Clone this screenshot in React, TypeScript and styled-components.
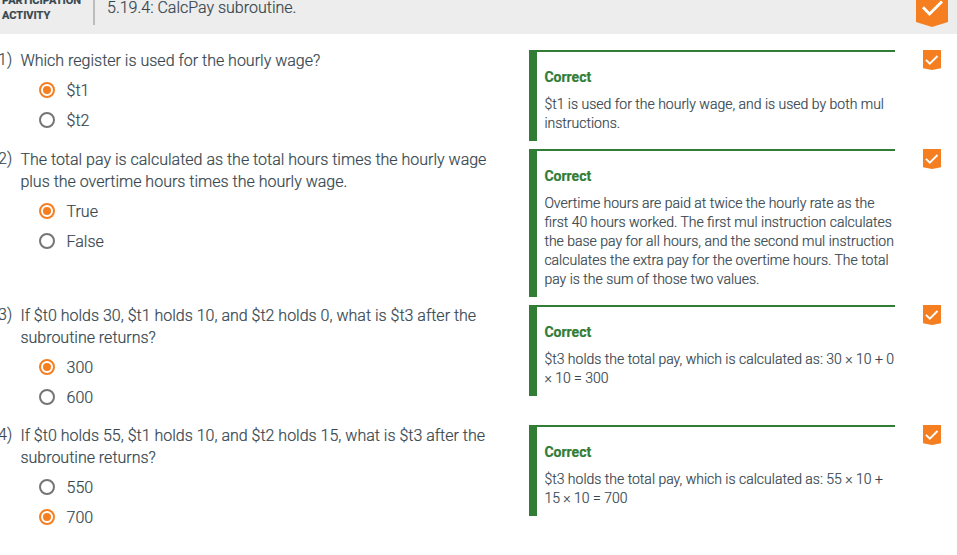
import React from "react";
import styled, { createGlobalStyle } from "styled-components";

const Global = createGlobalStyle`
  * { box-sizing: border-box; }
  body {
    margin: 0;
    background: #fff;
    color: #37474f;
    font: 300 16px/22px Roboto, "Liberation Sans", sans-serif;
    -webkit-text-stroke: 0.2px currentColor;
    overflow: hidden;
  }
`;

const Page = styled.main`
  width: 957px;
  height: 555px;
  overflow: hidden;
`;

const Header = styled.header`
  display: flex;
  align-items: flex-end;
  height: 34px;
  padding: 0 9px 0 2px;
  background: #ededed;
`;

const ActivityType = styled.div`
  flex: none;
  width: 91px;
  margin-bottom: 11px;
  font-size: 11px;
  line-height: 15px;
  font-weight: 700;
  white-space: pre-line;
`;

const Title = styled.h1`
  flex: 1;
  height: 40px;
  margin: 0 0 9px;
  padding: 12px 0 0 12px;
  border-left: 2px solid #bdbdbd;
  font-size: 16px;
  line-height: 22px;
  font-weight: 300;
`;

const HeaderBadge = styled.div`
  display: flex;
  margin-bottom: 7px;
`;

const Questions = styled.section`
  display: grid;
  row-gap: 8px;
  padding-top: 16px;
`;

const Question = styled.article`
  display: grid;
  grid-template-columns: 20px 509px 366px 1fr;
  align-items: start;
`;

const Number = styled.div`
  width: 18px;
  margin: -1px 0 0 -2px;
  white-space: nowrap;
`;

const Prompt = styled.div`
  padding-bottom: 5px;
`;

const PromptText = styled.p`
  margin: 0 0 3px;
  padding-left: 0.4px;
  white-space: pre-line;
`;

const Option = styled.label`
  display: flex;
  align-items: center;
  gap: 11.5px;
  height: 30px;
  padding-left: 19px;
`;

const OptionText = styled.span`
  padding-top: 1px;
`;

const Radio = styled.span<{ $checked: boolean }>`
  display: grid;
  place-items: center;
  width: 16px;
  height: 16px;
  border: 2px solid ${(p) => (p.$checked ? "#f57f20" : "#757575")};
  border-radius: 50%;

  &::after {
    content: "";
    width: 8px;
    height: 8px;
    border-radius: 50%;
    background: ${(p) => (p.$checked ? "#f57f20" : "transparent")};
  }
`;

const Explanation = styled.div`
  padding: 16px 0 8px 7.4px;
  border-top: 2px solid #317d36;
  border-left: 8px solid #317d36;
`;

const Verdict = styled.h2`
  margin: 0 0 8px;
  color: #317d36;
  font-size: 14px;
  line-height: 19px;
  font-weight: 700;
`;

const Reason = styled.p`
  margin: 0;
  font-size: 14px;
  line-height: 19px;
  white-space: pre;
`;

const RowBadge = styled.div`
  display: flex;
  padding-left: 28px;
`;

function LargeBadge() {
  return (
    <svg width="32" height="32" viewBox="0 0 32 32">
      <path d="M0 0H32V27L16 32L0 27Z" fill="#f57f20" />
      <path d="M7 12.3L13.5 19L26 6.5" fill="none" stroke="#fff" strokeWidth="2.8" />
    </svg>
  );
}

function SmallBadge() {
  return (
    <svg width="18" height="20" viewBox="0 0 18 20">
      <path d="M0 0H18V18.3L9 20L0 18.3Z" fill="#f57f20" />
      <path d="M3 9.8L6.8 13.6L14.5 6" fill="none" stroke="#fff" strokeWidth="1.9" />
    </svg>
  );
}

const questions = [
  {
    prompt: "Which register is used for the hourly wage?",
    options: ["$t1", "$t2"],
    selected: 0,
    reason: "$t1 is used for the hourly wage, and is used by both mul\ninstructions.",
  },
  {
    prompt: "The total pay is calculated as the total hours times the hourly wage\nplus the overtime hours times the hourly wage.",
    options: ["True", "False"],
    selected: 0,
    reason:
      "Overtime hours are paid at twice the hourly rate as the\nfirst 40 hours worked. The first mul instruction calculates\nthe base pay for all hours, and the second mul instruction\ncalculates the extra pay for the overtime hours. The total\npay is the sum of those two values.",
  },
  {
    prompt: "If $t0 holds 30, $t1 holds 10, and $t2 holds 0, what is $t3 after the\nsubroutine returns?",
    options: ["300", "600"],
    selected: 0,
    reason: "$t3 holds the total pay, which is calculated as: 30 × 10 + 0\n× 10 = 300",
  },
  {
    prompt: "If $t0 holds 55, $t1 holds 10, and $t2 holds 15, what is $t3 after the\nsubroutine returns?",
    options: ["550", "700"],
    selected: 1,
    reason: "$t3 holds the total pay, which is calculated as: 55 × 10 +\n15 × 10 = 700",
  },
];

export default function App() {
  return (
    <Page>
      <Global />
      <Header>
        <ActivityType>{"PARTICIPATION\nACTIVITY"}</ActivityType>
        <Title>5.19.4: CalcPay subroutine.</Title>
        <HeaderBadge>
          <LargeBadge />
        </HeaderBadge>
      </Header>
      <Questions>
        {questions.map((q, i) => (
          <Question key={i}>
            <Number>{i + 1})</Number>
            <Prompt>
              <PromptText>{q.prompt}</PromptText>
              {q.options.map((option, j) => (
                <Option key={option}>
                  <Radio $checked={j === q.selected} />
                  <OptionText>{option}</OptionText>
                </Option>
              ))}
            </Prompt>
            <Explanation>
              <Verdict>Correct</Verdict>
              <Reason>{q.reason}</Reason>
            </Explanation>
            <RowBadge>
              <SmallBadge />
            </RowBadge>
          </Question>
        ))}
      </Questions>
    </Page>
  );
}
